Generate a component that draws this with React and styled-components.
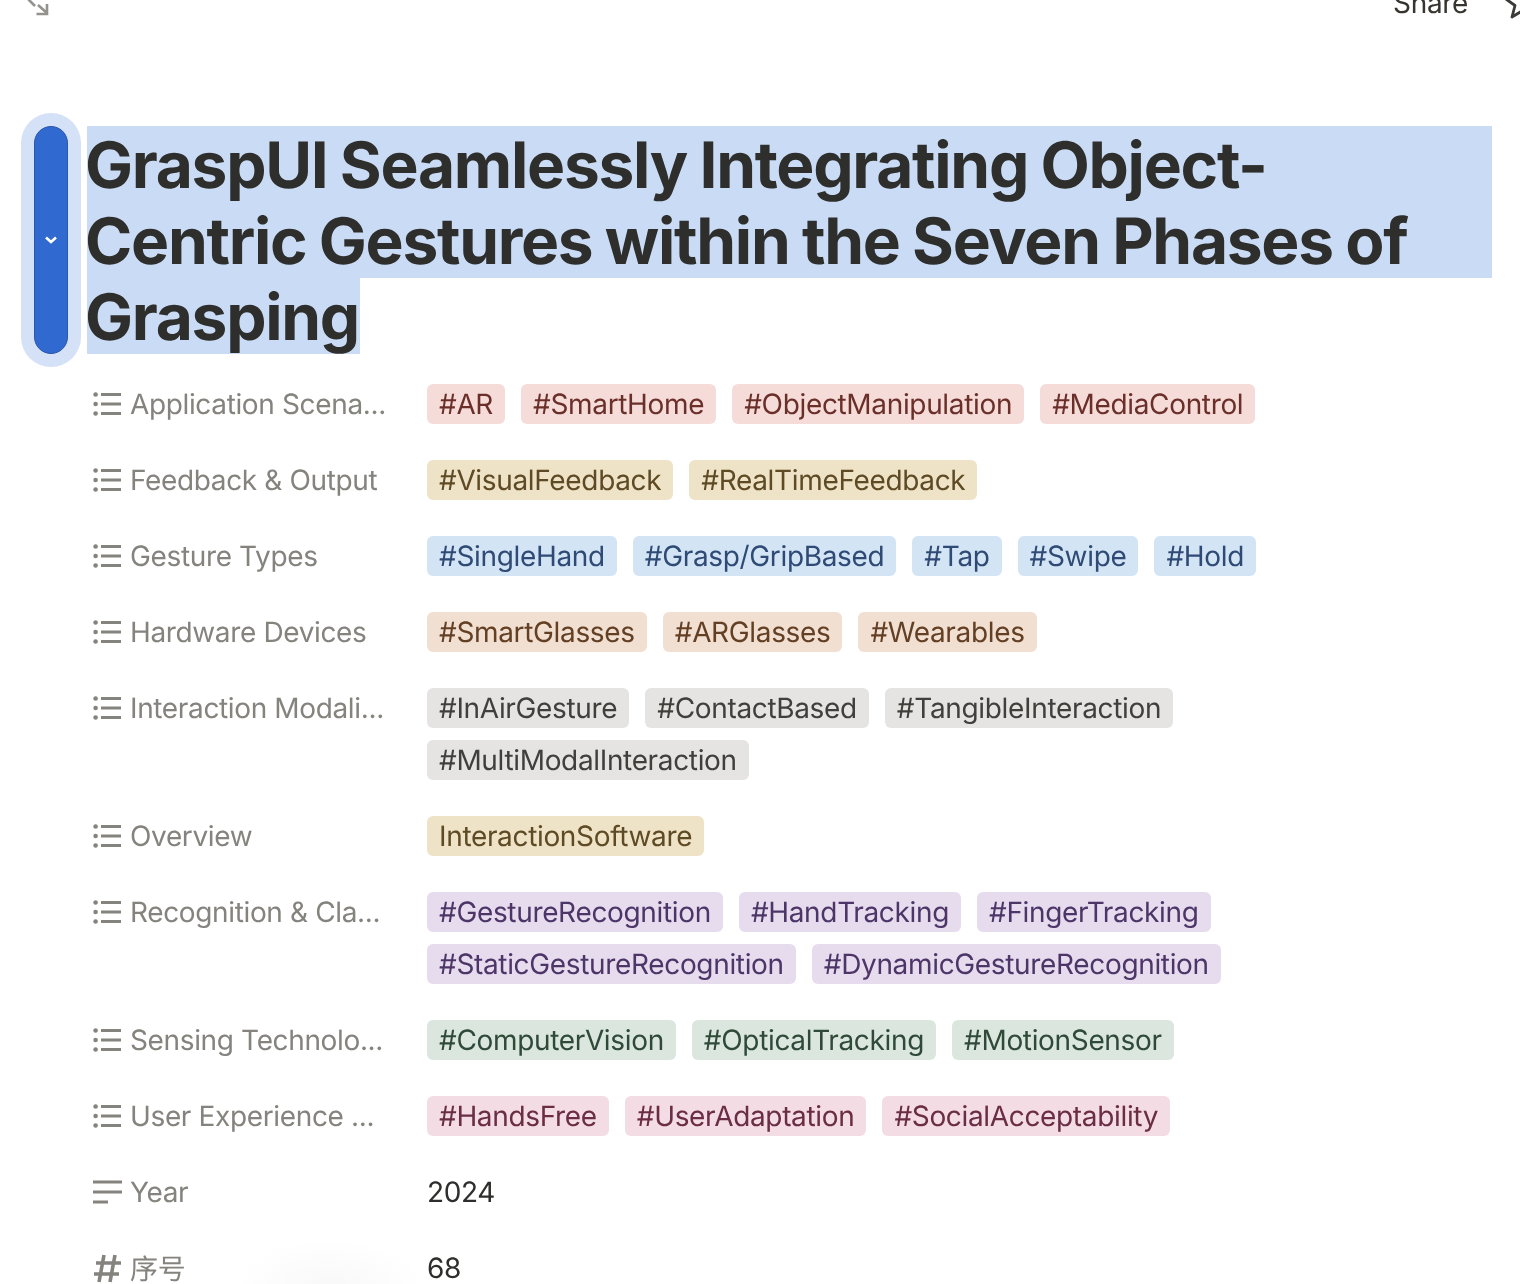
import React from "react";
import styled, { createGlobalStyle } from "styled-components";

const GlobalStyle = createGlobalStyle`
  html, body { margin: 0; padding: 0; background: #fff; }
  body {
    font-family: Inter, "Noto Sans CJK SC", sans-serif;
    text-rendering: geometricPrecision;
    overflow: hidden;
  }
`;

const palette = {
  red: ["#f5dcd9", "#6b2f2a"],
  yellow: ["#eee3c6", "#5e4a24"],
  blue: ["#d3e4f5", "#2f4b75"],
  orange: ["#f1dfd1", "#633f24"],
  gray: ["#e5e4e2", "#403f3b"],
  purple: ["#e6dcee", "#4d3568"],
  green: ["#dbe7de", "#2f4a38"],
  pink: ["#f3dce3", "#6a2d44"],
};

const properties = [
  { label: "Application Scena...", color: "red", tags: ["#AR", "#SmartHome", "#ObjectManipulation", "#MediaControl"] },
  { label: "Feedback & Output", color: "yellow", tags: ["#VisualFeedback", "#RealTimeFeedback"] },
  { label: "Gesture Types", color: "blue", tags: ["#SingleHand", "#Grasp/GripBased", "#Tap", "#Swipe", "#Hold"] },
  { label: "Hardware Devices", color: "orange", tags: ["#SmartGlasses", "#ARGlasses", "#Wearables"] },
  { label: "Interaction Modali...", color: "gray", tags: ["#InAirGesture", "#ContactBased", "#TangibleInteraction", "#MultiModalInteraction"] },
  { label: "Overview", color: "yellow", tags: ["InteractionSoftware"] },
  { label: "Recognition & Cla...", color: "purple", tags: ["#GestureRecognition", "#HandTracking", "#FingerTracking", "#StaticGestureRecognition", "#DynamicGestureRecognition"] },
  { label: "Sensing Technolo...", color: "green", tags: ["#ComputerVision", "#OpticalTracking", "#MotionSensor"] },
  { label: "User Experience ...", color: "pink", tags: ["#HandsFree", "#UserAdaptation", "#SocialAcceptability"] },
];

const ListIcon = () => (
  <svg width="30" height="26" viewBox="0 0 30 26" fill="none">
    <circle cx="2.6" cy="3.5" r="2.3" fill="#85837d" />
    <circle cx="2.6" cy="13" r="2.3" fill="#85837d" />
    <circle cx="2.6" cy="22.5" r="2.3" fill="#85837d" />
    <path d="M8 3.5h20M8 13h20M8 22.5h20" stroke="#85837d" strokeWidth="3" />
  </svg>
);

const TextIcon = () => (
  <svg width="30" height="26" viewBox="0 0 30 26" fill="none">
    <path d="M0 3h29M0 13h29M0 23h15" stroke="#85837d" strokeWidth="3" />
  </svg>
);

const HashIcon = () => (
  <svg width="30" height="30" viewBox="0 0 30 30" fill="none">
    <path d="M11 2 6 29M22 2l-5 27M3 10h25M1 21h25" stroke="#85837d" strokeWidth="3.6" />
  </svg>
);

const App = () => (
  <Page>
    <GlobalStyle />
    <BottomShade />
    <TopBar>
      <svg width="24" height="20" viewBox="0 0 24 20" fill="none">
        <path d="M1 -2 9 6M12 5l9 8M10.500 14h10.500V4" stroke="#94928c" strokeWidth="2.6" />
      </svg>
      <TopActions>
        <ShareLabel>Share</ShareLabel>
        <svg width="40" height="24" viewBox="0 0 40 24" fill="none">
          <path d="M6 -1 15 5.500 12 17l10-6" stroke="#3a3a38" strokeWidth="2.8" strokeLinejoin="round" />
        </svg>
      </TopActions>
    </TopBar>
    <TitleBlock>
      <Handle>
        <svg width="14" height="10" viewBox="0 0 14 10" fill="none">
          <path d="M2 2.500 7 7l5-4.500" stroke="#fff" strokeWidth="2.6" />
        </svg>
      </Handle>
      <TitleLine>GraspUI Seamlessly Integrating Object-</TitleLine>
      <TitleLine>Centric Gestures within the Seven Phases of</TitleLine>
      <TitleLine $fit>Grasping</TitleLine>
    </TitleBlock>
    <Properties>
      {properties.map((prop) => (
        <Row key={prop.label}>
          <Label><ListIcon />{prop.label}</Label>
          <Tags>
            {prop.tags.map((tag) => (
              <Tag key={tag} $color={prop.color}>{tag}</Tag>
            ))}
          </Tags>
        </Row>
      ))}
      <Row>
        <Label><TextIcon />Year</Label>
        <Value>2024</Value>
      </Row>
      <Row>
        <Label><HashIcon />序号</Label>
        <Value>68</Value>
      </Row>
    </Properties>
  </Page>
);

export default App;

const Page = styled.div`
  position: relative;
  width: 1520px;
  height: 1284px;
  overflow: hidden;
  background: #fff;
`;

const TopBar = styled.div`
  position: relative;
  height: 126px;
  padding-left: 26px;
  display: flex;
  justify-content: space-between;
  align-items: flex-start;
  color: #37352f;
  will-change: transform;
`;

const TopActions = styled.div`
  display: flex;
  align-items: flex-start;
  gap: 32px;
  margin-right: -20px;
`;

const ShareLabel = styled.span`
  font-size: 28px;
  line-height: 34px;
  margin-top: -14px;
  letter-spacing: -0.34px;
  color: #37352f;
`;

const TitleBlock = styled.div`
  position: relative;
  margin-left: 87px;
  width: 1405px;
  will-change: transform;
`;

const Handle = styled.div`
  position: absolute;
  left: -53px;
  top: 0;
  width: 34px;
  height: 228px;
  box-sizing: border-box;
  border: 1px solid #2a58a8;
  border-radius: 17px;
  background: #3069cf;
  box-shadow: 0 0 0 13px #d4e1f7;
  display: flex;
  align-items: center;
  justify-content: center;
`;

const TitleLine = styled.div`
  width: ${(p) => (p.$fit ? "fit-content" : "auto")};
  height: 76px;
  padding-right: ${(p) => (p.$fit ? "1px" : "0")};
  font-size: 64px;
  font-weight: 700;
  line-height: 80px;
  letter-spacing: -1.27px;
  word-spacing: -1.5px;
  text-indent: -2px;
  white-space: nowrap;
  color: #2e2e2c;
  background: #cadcf5;
`;

const Properties = styled.div`
  position: relative;
  margin: 30px 0 0 87px;
  display: flex;
  flex-direction: column;
  gap: 36px;
  will-change: transform;
`;

const Row = styled.div`
  display: flex;
  align-items: flex-start;
  min-height: 40px;
`;

const Label = styled.div`
  width: 340px;
  flex-shrink: 0;
  height: 40px;
  box-sizing: border-box;
  padding-left: 6px;
  display: flex;
  align-items: center;
  gap: 7px;
  font-size: 28px;
  letter-spacing: -0.36px;
  color: #85837d;
  white-space: nowrap;
`;

const Tags = styled.div`
  display: flex;
  flex-wrap: wrap;
  gap: 12px 16px;
  width: 1000px;
`;

const Tag = styled.span`
  height: 40px;
  padding: 0 12px;
  border-radius: 6px;
  font-size: 28px;
  line-height: 40px;
  letter-spacing: -0.34px;
  white-space: nowrap;
  background: ${(p) => palette[p.$color][0]};
  color: ${(p) => palette[p.$color][1]};
`;

const Value = styled.div`
  font-size: 28px;
  line-height: 40px;
  letter-spacing: -0.34px;
  color: #2e2e2c;
`;

const BottomShade = styled.div`
  position: absolute;
  left: 235px;
  bottom: -55px;
  width: 190px;
  height: 100px;
  background: radial-gradient(closest-side, #f8f8f8, #fff);
`;
